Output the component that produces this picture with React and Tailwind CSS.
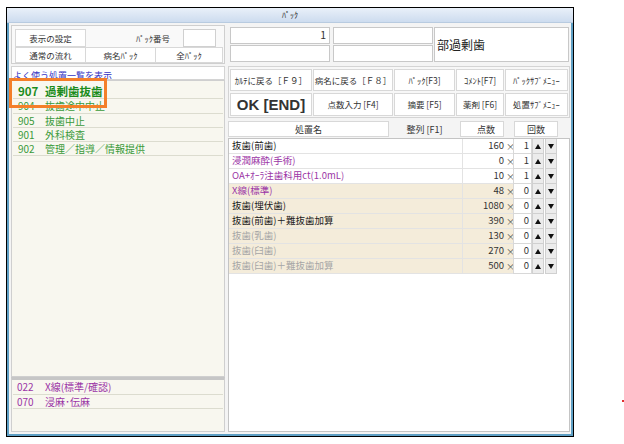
import React from 'react';

const Btn = ({ className = '', children }) => (
  <div className={'flex items-center justify-center bg-white border border-[#d8d8d8] text-[#333] whitespace-nowrap ' + className}>
    {children}
  </div>
);

const leftRows = [
  { no: '904', name: '抜歯途中中止', h: 'h-[15px]' },
  { no: '905', name: '抜歯中止', h: 'h-[14px]' },
  { no: '901', name: '外科検査', h: 'h-[14px]' },
  { no: '902', name: '管理／指導／情報提供', h: 'h-[14px]' },
];

const tableRows = [
  { name: '抜歯(前歯)', pts: '160', cnt: '1', tc: 'text-[#1a1a1a]', bg: 'bg-white' },
  { name: '浸潤麻酔(手術)', pts: '0', cnt: '1', tc: 'text-[#9b35a6]', bg: 'bg-white' },
  { name: 'OA+ｵｰﾗ注歯科用ct(1.0mL)', pts: '10', cnt: '1', tc: 'text-[#9b35a6]', bg: 'bg-white' },
  { name: 'X線(標準)', pts: '48', cnt: '0', tc: 'text-[#9b35a6]', bg: 'bg-[#f4ecda]' },
  { name: '抜歯(埋伏歯)', pts: '1080', cnt: '0', tc: 'text-[#1a1a1a]', bg: 'bg-[#f4ecda]' },
  { name: '抜歯(前歯)＋難抜歯加算', pts: '390', cnt: '0', tc: 'text-[#1a1a1a]', bg: 'bg-[#f4ecda]' },
  { name: '抜歯(乳歯)', pts: '130', cnt: '0', tc: 'text-[#a6a6a6]', bg: 'bg-[#f4ecda]' },
  { name: '抜歯(臼歯)', pts: '270', cnt: '0', tc: 'text-[#a6a6a6]', bg: 'bg-[#f4ecda]' },
  { name: '抜歯(臼歯)＋難抜歯加算', pts: '500', cnt: '0', tc: 'text-[#a6a6a6]', bg: 'bg-[#f4ecda]' },
];

const Up = () => (
  <svg width="6" height="5" viewBox="0 0 6 5"><polygon points="3,0 6,5 0,5" fill="#111" /></svg>
);
const Down = () => (
  <svg width="6" height="5" viewBox="0 0 6 5"><polygon points="0,0 6,0 3,5" fill="#111" /></svg>
);

function Left() {
  return (
    <div className="w-[214px] flex flex-col">
      {/* top box */}
      <div className="h-[39px] border border-[#cfcfcf] bg-[#f9f9f9] pl-[3px] pr-[1px] pt-[3px] flex flex-col text-[8.5px]">
        <div className="h-[18px] flex">
          <Btn className="w-[71px]">表示の設定</Btn>
          <div className="w-[97px] flex items-center justify-end pr-[13px] text-[#333]">ﾊﾟｯｸ番号</div>
          <div className="w-[33px] bg-white border border-[#d0d0d0]" />
        </div>
        <div className="h-[16px] flex">
          <Btn className="w-[71px]">通常の流れ</Btn>
          <Btn className="w-[70px] border-l-0">病名ﾊﾟｯｸ</Btn>
          <Btn className="w-[67px] border-l-0">全ﾊﾟｯｸ</Btn>
        </div>
      </div>
      {/* link */}
      <div className="mt-[2px] h-[14px] bg-white border border-[#d4d4d4] overflow-hidden pl-[1px] pt-[4px]">
        <span className="block text-[9px] text-[#3434c4] leading-[10px]">よく使う処置一覧を表示</span>
      </div>
      {/* list */}
      <div className="flex-1 bg-[#f8f7ef] border border-[#cfcfcf] px-[1px]">
        <div className="h-[18px] flex items-end pb-[1px] border-b border-[#dcdccf] pl-[5px] text-[11.5px] font-bold text-[#1c8c1c]">
          <span className="w-[27px]">907</span>
          <span>過剰歯抜歯</span>
        </div>
        {leftRows.map((r) => (
          <div key={r.no} className={r.h + ' flex items-center border-b border-[#dcdccf] pl-[5px] text-[10px] text-[#3a9a3a]'}>
            <span className="w-[27px]">{r.no}</span>
            <span>{r.name}</span>
          </div>
        ))}
      </div>
      {/* bottom list */}
      <div className="h-[55px] bg-[#f8f7ef] border-x border-b border-[#cfcfcf] border-t-[3px] border-t-[#c6c6c6] px-[1px]">
        <div className="h-[15px] flex items-center border-b border-[#dcdccf] pl-[4px] text-[10px] text-[#9b35a6]">
          <span className="w-[28px]">022</span>
          <span>X線(標準/確認)</span>
        </div>
        <div className="h-[14px] flex items-center border-b border-[#dcdccf] pl-[4px] text-[10px] text-[#9b35a6]">
          <span className="w-[28px]">070</span>
          <span>浸麻･伝麻</span>
        </div>
      </div>
    </div>
  );
}

function Right() {
  return (
    <div className="w-[342px] flex flex-col">
      {/* inputs */}
      <div className="h-[37px] pt-[2px] pl-[2px] flex">
        <div className="w-[100px] flex flex-col gap-[1px]">
          <div className="h-[17px] bg-white border border-[#c8c8c8] flex items-center justify-end pr-[3px] text-[10.5px] text-[#333]">1</div>
          <div className="h-[17px] bg-white border border-[#c8c8c8]" />
        </div>
        <div className="ml-[3px] w-[100px] flex flex-col gap-[1px]">
          <div className="h-[17px] bg-white border border-[#c8c8c8]" />
          <div className="h-[17px] bg-white border border-[#c8c8c8]" />
        </div>
        <div className="ml-[1px] w-[135px] h-[35px] bg-white border border-[#c8c8c8] flex items-center pl-[2px] text-[12px] text-[#222]">部過剰歯</div>
      </div>
      {/* buttons */}
      <div className="mt-[4px] h-[52px] border border-[#d4d4d4] bg-[#f7f7f7] pt-[2px] pl-[1px] pr-[1px] grid grid-cols-[82px_80px_61px_48px_1fr] grid-rows-[22px_23px] gap-x-[1px] gap-y-[2px] text-[8.5px]">
        <Btn>ｶﾙﾃに戻る［Ｆ９］</Btn>
        <Btn>病名に戻る［Ｆ８］</Btn>
        <Btn>ﾊﾟｯｸ[F3]</Btn>
        <Btn>ｺﾒﾝﾄ[F7]</Btn>
        <Btn>ﾊﾟｯｸｻﾌﾞﾒﾆｭｰ</Btn>
        <Btn className="font-['Liberation_Sans',sans-serif] font-bold text-[15px] text-[#1f32a2]">OK [END]</Btn>
        <Btn>点数入力 [F4]</Btn>
        <Btn>摘要 [F5]</Btn>
        <Btn>薬剤 [F6]</Btn>
        <Btn>処置ｻﾌﾞﾒﾆｭｰ</Btn>
      </div>
      {/* header */}
      <div className="mt-[3px] h-[16px] flex text-[9px]">
        <Btn className="w-[161px] bg-[#f3f3f3] border-[#cfcfcf]">処置名</Btn>
        <div className="w-[71px] flex items-center justify-center text-[#333]">整列 [F1]</div>
        <Btn className="w-[44px] justify-end pr-[8px]">点数</Btn>
        <Btn className="ml-[10px] w-[44px]">回数</Btn>
      </div>
      {/* table */}
      <div className="mt-[1px] flex-1 bg-white border border-[#c4c4c4]">
        {tableRows.map((r, i) => (
          <div key={i} className="h-[15px] flex text-[9.5px]">
            <div className={'w-[233px] pl-[3px] flex items-center border-b border-[#e3e3e3] whitespace-nowrap ' + r.bg + ' ' + r.tc}>{r.name}</div>
            <div className={'w-[44px] flex items-center justify-end pr-[2px] border-l border-b border-[#e3e3e3] text-[#333] ' + r.bg}>{r.pts}</div>
            <div className={'w-[7px] flex items-center justify-start border-b border-[#e3e3e3] text-[#555] text-[9px] ' + r.bg}>×</div>
            <div className="w-[19px] bg-white border-x border-b border-[#d8d8d8] flex items-center justify-end pr-[2px] text-[#333]">{r.cnt}</div>
            <div className="w-[12px] bg-[#ececec] border border-[#d0d0d0] border-t-0 flex items-center justify-center"><Up /></div>
            <div className="ml-[1px] w-[12px] bg-[#ececec] border border-[#d0d0d0] border-t-0 flex items-center justify-center"><Down /></div>
          </div>
        ))}
      </div>
    </div>
  );
}

export default function App() {
  return (
    <div className="relative w-[624px] h-[444px] bg-white overflow-hidden font-['Noto_Sans_CJK_JP','Noto_Sans',sans-serif] leading-none">
      <div className="ml-[6px] mt-[7px] w-[568px] h-[430px] border border-black flex flex-col">
        <div className="h-[15px] shrink-0 bg-gradient-to-b from-[#e9f0f9] to-[#cddcef] border-b border-[#b8cbe0] flex items-center justify-center text-[8px] text-[#222]">
          ﾊﾟｯｸ
        </div>
        <div className="flex-1 min-h-0 border-x-2 border-b-2 border-[#5e9fc4] bg-[#f4f4f4] pl-[2px] pr-[1px] pt-[2px] pb-[2px] flex gap-[3px]">
          <Left />
          <Right />
        </div>
      </div>
      <div className="absolute left-[9px] top-[78px] w-[98px] h-[30px] border-[3px] border-[#f47f2a]" />
      <div className="absolute left-[622px] top-[400px] w-[2px] h-[2px] bg-[#e03030]" />
    </div>
  );
}
